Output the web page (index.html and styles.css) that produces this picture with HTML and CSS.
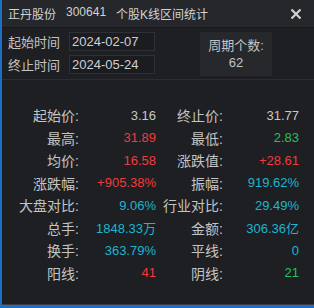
FILE: index.html
```html
<!DOCTYPE html>
<html lang="zh">
<head>
    <meta charset="UTF-8">
    <title>个股K线区间统计</title>
    <link rel="stylesheet" href="styles.css">
</head>
<body>
<div class="dialog">
    <div class="title-bar">
        <span class="title"><span>正丹股份</span><span>300641</span><span>个股K线区间统计</span></span>
        <svg class="close" width="12" height="12" viewBox="0 0 12 12"><path d="M1.5 1.5 L10.5 10.5 M10.5 1.5 L1.5 10.5" stroke="#d0d0d0" stroke-width="2.2"/></svg>
    </div>

    <div class="range">
        <div class="dates">
            <div class="date-row"><span class="date-label">起始时间</span><span class="date-box">2024-02-07</span></div>
            <div class="date-row"><span class="date-label">终止时间</span><span class="date-box">2024-05-24</span></div>
        </div>
        <div class="period">
            <span>周期个数:</span>
            <span>62</span>
        </div>
    </div>

    <div class="stats">
        <span class="lbl">起始价:</span><span class="val">3.16</span>
        <span class="lbl">终止价:</span><span class="val">31.77</span>

        <span class="lbl">最高:</span><span class="val up">31.89</span>
        <span class="lbl">最低:</span><span class="val down">2.83</span>

        <span class="lbl">均价:</span><span class="val up">16.58</span>
        <span class="lbl">涨跌值:</span><span class="val up">+28.61</span>

        <span class="lbl">涨跌幅:</span><span class="val up">+905.38%</span>
        <span class="lbl">振幅:</span><span class="val info">919.62%</span>

        <span class="lbl">大盘对比:</span><span class="val info">9.06%</span>
        <span class="lbl">行业对比:</span><span class="val info">29.49%</span>

        <span class="lbl">总手:</span><span class="val info">1848.33万</span>
        <span class="lbl">金额:</span><span class="val info">306.36亿</span>

        <span class="lbl">换手:</span><span class="val info">363.79%</span>
        <span class="lbl">平线:</span><span class="val info">0</span>

        <span class="lbl">阳线:</span><span class="val up">41</span>
        <span class="lbl">阴线:</span><span class="val down">21</span>
    </div>
</div>
</body>
</html>
```

FILE: styles.css
```css
/* dialog: 个股K线区间统计 */
body { margin: 0; background-color: #1d1f23; font-family: 'Liberation Sans', 'Noto Sans CJK SC', sans-serif; font-size: 13px; color: #c4c4c4; }
.dialog { width: 314px; height: 308px; box-sizing: border-box; background-color: #1d1f23; border-left: 2px solid #1b6fc4; border-bottom: 3px solid #1b6fc4; box-shadow: inset 0 -1px 0 #3a3d42; display: flex; flex-direction: column; }
.title-bar { height: 28px; box-sizing: border-box; display: flex; align-items: center; justify-content: space-between; padding: 0 12px 0 6px; background-color: #25272b; border-bottom: 1px solid #16181b; }
.title { display: flex; gap: 10px; font-size: 12px; color: #d2d2d2; }
.close { display: block; }

.range { display: flex; justify-content: space-between; height: 52px; box-sizing: border-box; padding: 4px 42px 4px 6px; border-bottom: 1px solid #2c2e33; }
.dates { display: flex; flex-direction: column; gap: 4px; }
.date-row { display: flex; align-items: center; height: 19px; }
.date-label { width: 61px; flex-shrink: 0; white-space: nowrap; color: #c4c4c4; }
.date-box { width: 86px; height: 19px; box-sizing: border-box; border: 1px solid #2e3035; background-color: #1a1c20; padding-left: 2px; line-height: 17px; color: #d0d0d0; }
.period { width: 72px; height: 44px; background-color: #26282c; display: flex; flex-direction: column; align-items: center; justify-content: center; line-height: 17px; color: #c4c4c4; }

.stats { display: grid; grid-template-columns: 77px 77px 67px 76px; grid-auto-rows: 22.5px; align-items: center; padding: 24px 0 0 0; }
.lbl { text-align: right; color: #c4c4c4; font-size: 14px; }
.val { text-align: right; color: #c8c8c8; }
.up { color: #f23a3a; }
.down { color: #1ec35a; }
.info { color: #1fb4cf; }
```
